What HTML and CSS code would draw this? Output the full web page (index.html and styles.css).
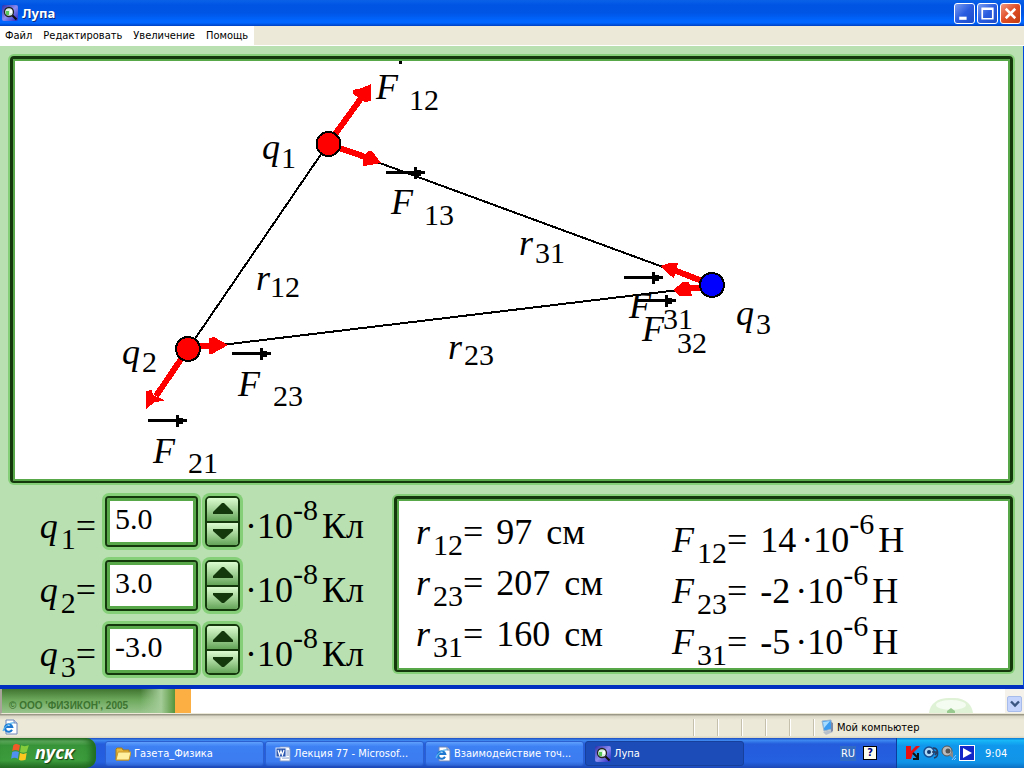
FILE: index.html
```html
<!DOCTYPE html>
<html lang="ru">
<head>
<meta charset="utf-8">
<title>Лупа</title>
<link rel="stylesheet" href="styles.css">
</head>
<body>
<svg class="defs" width="0" height="0" aria-hidden="true">
  <defs>
    <linearGradient id="lensbg" x1="0" y1="0" x2="1" y2="1"><stop offset="0" stop-color="#2c2ca8"/><stop offset=".5" stop-color="#8c8cf0"/><stop offset="1" stop-color="#2424c0"/></linearGradient>
    <symbol id="lens" viewBox="0 0 16 16">
      <rect width="16" height="16" rx="2" fill="url(#lensbg)"/>
      <circle cx="7" cy="7" r="4.5" fill="#d8f0e4" stroke="#222" stroke-width="1.3"/>
      <path d="M4 6h3v4H4z" fill="#58c858"/><path d="M8 5h2v3H8z" fill="#fff"/>
      <path d="M10.5 10.5l4 4" stroke="#111" stroke-width="2.2"/>
    </symbol>
    <symbol id="ie" viewBox="0 0 16 16">
      <path d="M4 1h8l3 3v11H4z" fill="#fff" stroke="#6f86b8"/><path d="M12 1v3h3" fill="#c6d4ee" stroke="#6f86b8"/>
      <path d="M10 10.8A3.8 3.8 0 1 1 10.3 8H3.5" fill="none" stroke="#1c78d0" stroke-width="2"/>
      <path d="M1 12C2 8 8 3 12 4" fill="none" stroke="#58b4f0" stroke-width="1.2"/>
    </symbol>
    <symbol id="arrow" viewBox="0 0 40 13" overflow="visible">
      <path d="M0 5h28V1h3v3h4v1h4v3h-4v2h-4v3h-3V8H0z" shape-rendering="crispEdges"/>
    </symbol>
  </defs>
</svg>

<header class="titlebar">
  <svg class="icon16"><use href="#lens"/></svg>
  <h1 class="title">Лупа</h1>
  <button class="winbtn" aria-label="Свернуть"><svg viewBox="0 0 18 18"><path d="M4 12h7v3H4z" fill="#fff"/></svg></button>
  <button class="winbtn" aria-label="Развернуть"><svg viewBox="0 0 18 18"><path d="M4 4h10v10H4zM4 5h10" fill="none" stroke="#fff" stroke-width="1.600"/></svg></button>
  <button class="winbtn close" aria-label="Закрыть"><svg viewBox="0 0 18 18"><path d="M4.500 4.500l9 9m0-9l-9 9" stroke="#fff" stroke-width="2.400"/></svg></button>
</header>
<nav class="menubar">
  <div class="menus"><button>Файл</button><button>Редактировать</button><button>Увеличение</button><button>Помощь</button></div>
</nav>

<main class="lab">
  <section class="panel scene">
    <svg class="diagram" viewBox="13 59 997 422" preserveAspectRatio="xMinYMin meet">
      <g class="edges" shape-rendering="crispEdges">
        <path d="M328 144L188 349M328 144L712 285M188 349L712 286"/>
      </g>
      <rect x="399" y="61" width="3" height="3"/>
      <use href="#arrow" x="386" y="166" width="40" height="13"/>
      <use href="#arrow" x="232" y="347" width="40" height="13"/>
      <use href="#arrow" x="148" y="414" width="40" height="13"/>
      <use href="#arrow" x="624" y="271" width="40" height="13"/>
      <use href="#arrow" x="637" y="294" width="40" height="13"/>
      <g class="force" shape-rendering="crispEdges">
        <path class="shaft" d="M328 144L362 97M328 144L371 159M188 346H214M188 349L156 396M712 285L674 270M712 288H686"/>
        <path class="head" d="M371 84v17l-6 1-12-8v-4l9-2zM381 163l-11 2-7 1v-7l5-8 4 0zM228 345l-16 9h-3v-16l5-1zM146 409v-18l6-1 1 5 11 5-1 1-8 1zM660 266l9-3h9l-4 15-6-4zM673 290l10-8h6l3 14h-12z"/>
      </g>
      <g class="charge" shape-rendering="crispEdges">
        <circle class="positive" cx="328.500" cy="144" r="12"/>
        <circle class="positive" cx="188" cy="349" r="12"/>
        <circle class="negative" cx="712" cy="285" r="12"/>
      </g>
      <g class="symbols">
        <text x="262" y="159">q</text><text x="122" y="364">q</text><text x="736" y="325">q</text>
        <text x="256" y="290">r</text><text x="448" y="359">r</text><text x="519" y="255">r</text>
        <text x="376" y="99">F</text><text x="391" y="214">F</text><text x="238" y="396">F</text>
        <text x="153" y="463">F</text><text x="629" y="318">F</text><text x="642" y="341">F</text>
      </g>
      <g class="indices">
        <text x="281" y="168">1</text><text x="142" y="372">2</text><text x="756" y="334">3</text>
        <text x="270" y="297">12</text><text x="464" y="365">23</text><text x="535" y="263">31</text>
        <text x="409" y="110">12</text><text x="424" y="225">13</text><text x="273" y="406">23</text>
        <text x="188" y="473">21</text><text x="663" y="329">31</text><text x="677" y="353">32</text>
      </g>
    </svg>
  </section>

  <div class="lower">
    <form class="charges">
      <div class="row">
        <label for="q1"><i>q</i><sub>1</sub>=</label>
        <input id="q1" class="field" type="text" value="5.0">
        <div class="spin"><button type="button" aria-label="Увеличить q1"><svg viewBox="0 0 22 12"><path d="M10 0h2l9 9v2H1V9z"/></svg></button><button type="button" aria-label="Уменьшить q1"><svg viewBox="0 0 22 12"><path d="M1 1h20v2l-9 8h-2L1 3z"/></svg></button></div>
        <span class="unit">·10<sup>-8</sup>Кл</span>
      </div>
      <div class="row">
        <label for="q2"><i>q</i><sub>2</sub>=</label>
        <input id="q2" class="field" type="text" value="3.0">
        <div class="spin"><button type="button" aria-label="Увеличить q2"><svg viewBox="0 0 22 12"><path d="M10 0h2l9 9v2H1V9z"/></svg></button><button type="button" aria-label="Уменьшить q2"><svg viewBox="0 0 22 12"><path d="M1 1h20v2l-9 8h-2L1 3z"/></svg></button></div>
        <span class="unit">·10<sup>-8</sup>Кл</span>
      </div>
      <div class="row">
        <label for="q3"><i>q</i><sub>3</sub>=</label>
        <input id="q3" class="field" type="text" value="-3.0">
        <div class="spin"><button type="button" aria-label="Увеличить q3"><svg viewBox="0 0 22 12"><path d="M10 0h2l9 9v2H1V9z"/></svg></button><button type="button" aria-label="Уменьшить q3"><svg viewBox="0 0 22 12"><path d="M1 1h20v2l-9 8h-2L1 3z"/></svg></button></div>
        <span class="unit">·10<sup>-8</sup>Кл</span>
      </div>
    </form>
    <section class="panel results">
      <div class="distances">
        <p><i>r</i><sub>12</sub>= <span class="value">97</span> см</p>
        <p><i>r</i><sub>23</sub>= <span class="value">207</span> см</p>
        <p><i>r</i><sub>31</sub>= <span class="value">160</span> см</p>
      </div>
      <div class="forces">
        <p><i>F</i><sub>12</sub>= <span class="value">14</span>·10<sup>-6</sup>Н</p>
        <p><i>F</i><sub>23</sub>= <span class="value">-2</span>·10<sup>-6</sup>Н</p>
        <p><i>F</i><sub>31</sub>= <span class="value">-5</span>·10<sup>-6</sup>Н</p>
      </div>
    </section>
  </div>
</main>

<div class="browser">
  <div class="copyright">© ООО 'ФИЗИКОН', 2005</div>
  <div class="orange"></div>
  <div class="blank"><svg class="totop" viewBox="0 0 44 15"><path d="M0 15C1 6 8 0 20 0h5c12 0 18 7 19 15z" fill="#e0f2d6"/><ellipse cx="22" cy="7" rx="15" ry="5" fill="#f4fbf0"/><path d="M18 15v-2l4-3 4 3v2z" fill="#98ca90"/></svg></div>
  <div class="scroll"><button aria-label="Прокрутить вниз"><svg viewBox="0 0 10 8"><path d="M1 1.500l4 4 4-4" fill="none" stroke="#3c5684" stroke-width="2.400"/></svg></button></div>
</div>

<footer class="status">
  <svg class="icon16"><use href="#ie"/></svg>
  <span class="grow"></span>
  <span class="cell"></span><span class="cell"></span><span class="cell"></span><span class="cell"></span><span class="cell"></span>
  <span class="cell zone"><svg class="icon16" viewBox="0 0 16 16"><path d="M3 2l9-1 1 9-8 2z" fill="#3c9cf0" stroke="#9cb4cc"/><path d="M4 3l7-1-6 7z" fill="#a8dcff"/><path d="M4 13l8-2 2 2-7 3z" fill="#b8c0cc"/><path d="M12 3l2 1v8l-2 1z" fill="#7c88a4"/></svg>Мой компьютер</span>
</footer>

<div class="taskbar">
  <button class="start"><svg viewBox="0 0 18 18"><path d="M3 3c2-2 4-1 6 0L8 8C6 7 4 7 2 8z" fill="#f05a28"/><path d="M10 3c2 1 4 1 7 0l-2 6c-2 1-4 1-6 0z" fill="#84cc3c"/><path d="M2 9c2-1 4-1 6 0l-1 6c-2-1-4-1-6 0z" fill="#5090f0"/><path d="M9 10c2 1 4 1 6 0l-1 6c-2 1-5 1-6 0z" fill="#fcc820"/></svg>пуск</button>
  <nav class="tasks">
    <button><svg class="icon16" viewBox="0 0 16 16"><path d="M1 14V3l1-1h5l1 2h6v10z" fill="#e8b83c" stroke="#a87c14"/><path d="M1 14L3 6h13l-2 8z" fill="#fff0a0" stroke="#c89828"/></svg>Газета_Физика</button>
    <button><svg class="icon16" viewBox="0 0 16 16"><path d="M5 1h9l1 2v12H5z" fill="#fff" stroke="#8098c8"/><path d="M11 5h3M11 7h3M11 9h3M7 12h7" stroke="#7894c8"/><rect x="1" y="2" width="10" height="9" fill="#2c58b0" stroke="#dce8fc"/><path d="M3 4l1.500 5L6 5l1.500 4L9 4" fill="none" stroke="#fff" stroke-width="1.200"/></svg>Лекция 77 - Microsof...</button>
    <button><svg class="icon16"><use href="#ie"/></svg>Взаимодействие точ...</button>
    <button class="active"><svg class="icon16"><use href="#lens"/></svg>Лупа</button>
  </nav>
  <div class="lang"><span class="ru">RU</span><button class="help">?</button></div>
  <div class="tray">
    <svg class="icon16" viewBox="0 0 16 16"><path d="M1 1h5v5l5-5h4L8 8l-2 6H1z" fill="#e81010"/><path d="M8 8l5 5M13 8v6H8" fill="none" stroke="#111" stroke-width="2"/></svg>
    <svg class="icon16" viewBox="0 0 16 16"><circle cx="6" cy="7" r="5" fill="#aed8f4" stroke="#174c90" stroke-width="1.500"/><circle cx="6" cy="7" r="2" fill="#103870"/><path d="M10 3c6 0 6 9 1 10M9 7h5l-2 3" fill="none" stroke="#263c60" stroke-width="1.500"/></svg>
    <svg class="icon16" viewBox="0 0 16 16"><circle cx="6" cy="6" r="5" fill="#bbb" stroke="#555"/><circle cx="7" cy="6" r="2.500" fill="#555"/><path d="M8 10l4-4v7z" fill="#888"/><path d="M11 15l4-5M13 15l2-2" stroke="#8cc4ff"/></svg>
    <svg class="icon16" viewBox="0 0 16 16"><rect x=".5" y=".5" width="15" height="15" fill="#1428c8" stroke="#fff"/><path d="M4 3l9 5-9 5z" fill="#fff"/></svg>
    <time>9:04</time>
  </div>
</div>
</body>
</html>
```
FILE: styles.css
```css
* { box-sizing: border-box; }
body {
  margin: 0;
  min-height: 100vh;
  display: flex;
  flex-direction: column;
  font: 11px "DejaVu Sans Condensed", "DejaVu Sans", sans-serif;
  color: #000;
  background: #fff;
}
button { font: inherit; color: inherit; border: 0; padding: 0; background: none; }
p { margin: 0; }
.defs { position: absolute; }
.icon16 { width: 16px; height: 16px; flex: none; }

.titlebar {
  height: 26px;
  display: flex;
  align-items: center;
  gap: 2px;
  padding: 0 3px 0 2px;
  background: linear-gradient(#0a62e8 0, #0054e3 20%, #0055e5 50%, #0066ff 80%, #0066ff 88%, #0040c0 100%);
}
.title { flex: 1; margin: 0 0 0 2px; font: bold 13px "Noto Sans", sans-serif; color: #fff; text-shadow: 1px 1px #0c2c80; }
.winbtn {
  width: 21px; height: 21px;
  border: 1px solid #fff;
  border-radius: 3px;
  background: linear-gradient(135deg, #7a9cf0, #2a5ce0 50%, #1c4cc8);
}
.winbtn svg { display: block; width: 19px; height: 19px; }
.winbtn.close { background: linear-gradient(135deg, #f09880, #e04c24 50%, #c03c10); }

.menubar { height: 20px; background: #ece9d8; border-bottom: 1px solid #fff; }
.menus { display: inline-flex; height: 19px; padding: 0 6px 0 5px; gap: 11px; background: #fff; }

.lab {
  flex: 1;
  display: flex;
  flex-direction: column;
  gap: 13px;
  padding: 10px 10px 8px;
  background: #b9e0b1;
  border-right: 1px solid #0048e0;
  border-bottom: 4px solid #0030c0;
  font-family: "Liberation Serif", serif;
  font-size: 36px;
}
.panel {
  background: #fff;
  border: 3px solid #14380c;
  border-bottom-width: 2px;
  border-radius: 4px;
  box-shadow: 0 0 0 2px #84cf78, inset 0 0 0 2px #58a748;
}
.diagram { display: block; width: 100%; height: auto; }
.edges { fill: none; stroke: #000; stroke-width: 2; }
.shaft { fill: none; stroke: #f00; stroke-width: 6; }
.head { fill: #f00; }
.charge { stroke: #000; stroke-width: 2; }
.positive { fill: #f00; }
.negative { fill: #00f; }
.symbols { font-size: 36px; font-style: italic; }
.indices { font-size: 30px; }

.lower { display: flex; align-items: flex-start; gap: 30px; }
.row { display: flex; align-items: flex-start; height: 64px; line-height: 60px; white-space: nowrap; }
.row:last-child { height: 51px; }
.row label { width: 86px; margin-right: 9px; text-align: right; }
sub, sup { font-size: 30px; line-height: 0; }
sub { vertical-align: -11px; margin-left: 3px; }
sup { vertical-align: 18px; margin-right: 4px; }
.field {
  width: 93px; height: 51px;
  margin-right: 7px;
  padding: 0 8px 6px;
  border: 2px solid #14380c;
  border-radius: 4px;
  background: #fff;
  box-shadow: 0 0 0 3px #84cf78, inset 0 0 0 3px #58a748;
  font: 30px "Liberation Serif", serif;
}
.spin {
  width: 35px; height: 51px;
  margin-right: 5px;
  display: flex;
  flex-direction: column;
  border: 2px solid #14380c;
  border-radius: 5px;
  box-shadow: 0 0 0 3px #84cf78;
  overflow: hidden;
}
.spin button { flex: 1; display: flex; align-items: center; justify-content: center; background: linear-gradient(#dcfcd0, #a4d498 50%, #64a458); }
.spin button + button { border-top: 2px solid #14380c; }
.spin svg { width: 22px; height: 12px; fill: #14380c; }
.results {
  flex: 1;
  display: grid;
  grid-template-columns: 256px 1fr;
  height: 176px;
  padding-left: 19px;
  line-height: 51px;
  white-space: nowrap;
}
.distances { padding-top: 8px; }
.forces { padding-top: 16px; }
.value { margin: 0 5px 0 4px; }

.browser { height: 25px; display: flex; background: #fff; border-bottom: 1px solid #ece9d8; border-left: 2px solid #a8a498; }
.copyright {
  width: 173px;
  padding: 10px 0 0 7px;
  font: bold 10px/14px "Liberation Sans", sans-serif;
  color: #3c7430;
  background:
    linear-gradient(90deg, transparent 80%, #a4cc98 92%, #54943c),
    linear-gradient(#407430, #6ca85c 45%, #98c48c);
}
.orange { width: 16px; background: #fcb044; }
.blank { flex: 1; display: flex; justify-content: flex-end; align-items: flex-end; padding-right: 32px; }
.totop { width: 44px; height: 15px; }
.scroll { width: 19px; padding: 7px 2px 0; background: #f4f2ea; }
.scroll button { width: 15px; height: 16px; display: grid; place-items: center; border: 1px solid #a8bcec; border-radius: 2px; background: #c4d4fc; }
.scroll svg { width: 10px; height: 8px; }

.status {
  height: 24px;
  display: flex;
  align-items: center;
  padding: 2px 0 0 2px;
  background: linear-gradient(#8c8878 0, #dcd8c8 10%, #ece9d8 25%, #ece9d8 90%, #d8d4c0);
}
.grow { flex: 1; }
.cell { width: 24px; height: 17px; border-left: 1px solid #c4c0ac; box-shadow: inset 1px 0 #fff; }
.zone { width: 211px; display: flex; align-items: center; gap: 2px; padding-left: 5px; }

.taskbar {
  height: 30px;
  display: flex;
  color: #fff;
  background: linear-gradient(#1c4cc0 0, #3c88f0 8%, #245cdc 20%, #2460e0 80%, #1c48b4);
}
.start {
  width: 96px;
  display: flex;
  align-items: center;
  gap: 5px;
  padding: 0 0 2px 10px;
  border-radius: 0 10px 10px 0;
  background: linear-gradient(#286c28 0, #60ac60 10%, #389438 25%, #3c9c3c 75%, #246c24);
  box-shadow: inset -5px 0 6px #206c20;
  font: italic bold 18px "Open Sans", sans-serif;
  text-shadow: 1px 1px 1px #143c14;
}
.start svg { width: 20px; height: 20px; }
.tasks { flex: 1; display: flex; gap: 1px; padding: 3px 0 2px 9px; }
.tasks button {
  flex: 0 1 159px;
  min-width: 0;
  display: flex;
  align-items: center;
  gap: 3px;
  padding-left: 9px;
  border: 1px solid #2c60d0;
  border-radius: 3px;
  background: linear-gradient(#60a0fc, #3c80f4 20%, #3c7cf0 85%, #3068d8);
  white-space: nowrap;
}
.tasks .active { background: #1c4cb8; border-color: #16409c; }
.lang { display: flex; align-items: center; gap: 7px; padding-right: 19px; }
.ru { padding: 1px 1px; background: #316ac5; }
.help { width: 14px; height: 14px; border: 1px solid #000; background: #fffff0; color: #000080; font-weight: bold; line-height: 12px; }
.tray {
  width: 128px;
  display: flex;
  align-items: center;
  gap: 2px;
  padding-left: 8px;
  border-left: 1px solid #0c3c9c;
  background: linear-gradient(#0c78d0 0, #18b8f8 8%, #1098ec 25%, #1094e8 80%, #0c70c4);
}
.tray time { margin-left: 8px; }
```
